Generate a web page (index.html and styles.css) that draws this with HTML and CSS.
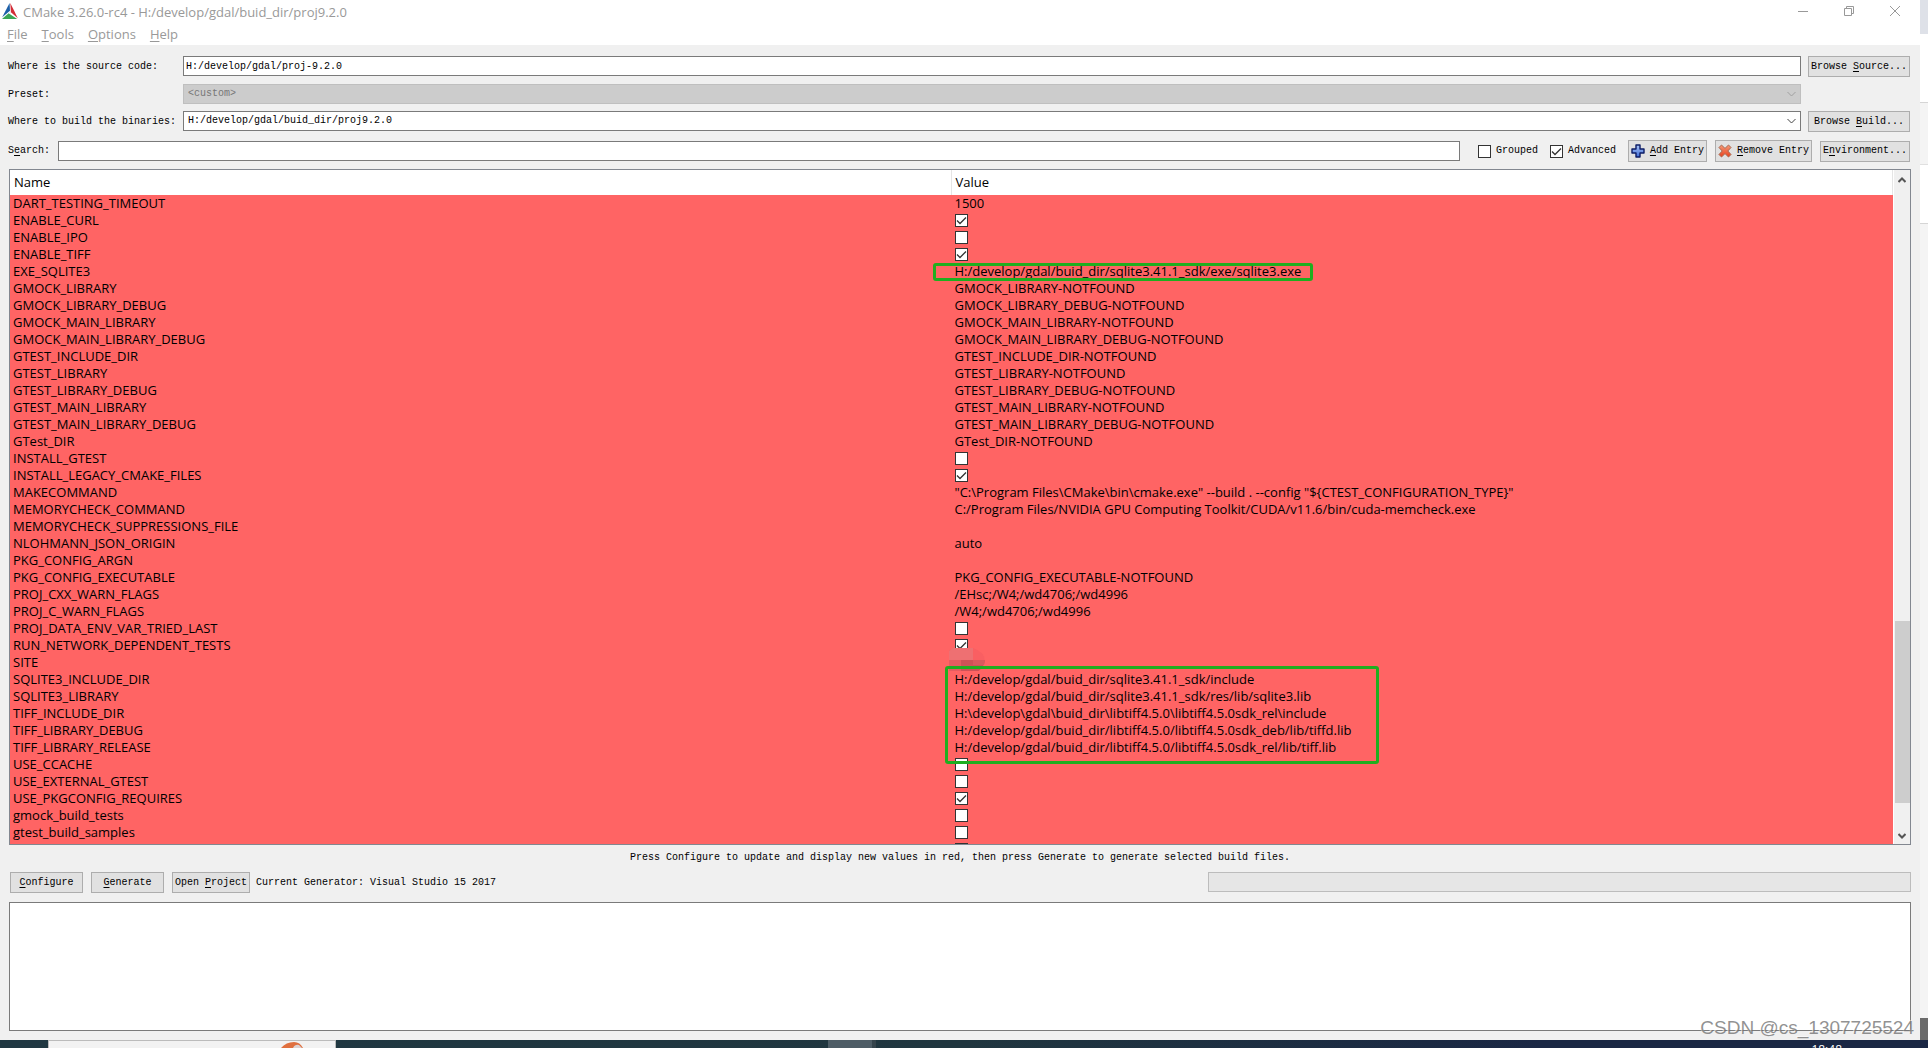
FILE: index.html
```html
<!DOCTYPE html>
<html lang="en">
<head>
<meta charset="utf-8">
<title>CMake 3.26.0-rc4</title>
<link rel="stylesheet" href="styles.css">
</head>
<body>
<div class="desktop">
  <main class="window">
    <header class="titlebar">
      <svg class="logo" viewBox="0 0 16 16" width="16" height="16" aria-hidden="true">
        <path d="M7.6 0 0.2 14.2 8 7.8Z" fill="#1c5fa8"/>
        <path d="M8.3 0 8.9 9.2 15.8 15.2Z" fill="#d32b35"/>
        <path d="M6.6 10.2 0 16H15.2Z" fill="#3aa655"/>
        <path d="M7.4 9 8.2 8.2 8.6 10.9Z" fill="#c8d4dc"/>
      </svg>
      <h1 class="title">CMake 3.26.0-rc4 - H:/develop/gdal/buid_dir/proj9.2.0</h1>
      <div class="window-buttons">
        <button type="button" aria-label="Minimize"><svg viewBox="0 0 10 10" width="10" height="10"><path d="M0 5.5H10"/></svg></button>
        <button type="button" aria-label="Restore"><svg viewBox="0 0 10 10" width="10" height="10"><path d="M0.5 2.5H7.5V9.5H0.5ZM2.5 2.5V0.5H9.5V7.5H7.5"/></svg></button>
        <button type="button" aria-label="Close"><svg viewBox="0 0 10 10" width="10" height="10"><path d="M0 0 10 10M10 0 0 10"/></svg></button>
      </div>
    </header>
    <nav class="menubar">
      <a href="#file"><u>F</u>ile</a>
      <a href="#tools"><u>T</u>ools</a>
      <a href="#options"><u>O</u>ptions</a>
      <a href="#help"><u>H</u>elp</a>
    </nav>

    <form class="content">
      <div class="paths">
        <label for="source">Where is the source code:</label>
        <input class="field" id="source" type="text" value="H:/develop/gdal/proj-9.2.0">
        <button type="button" class="btn">Browse <u>S</u>ource...</button>

        <label for="preset">Preset:</label>
        <select class="field combo" id="preset" disabled><option>&lt;custom&gt;</option></select>
        <span></span>

        <label for="build">Where to build the binaries:</label>
        <select class="field combo" id="build"><option>H:/develop/gdal/buid_dir/proj9.2.0</option></select>
        <button type="button" class="btn">Browse <u>B</u>uild...</button>
      </div>

      <div class="toolbar">
        <label for="search">S<u>e</u>arch:</label>
        <input class="field search" id="search" type="text">
        <label class="option"><input type="checkbox">Grouped</label>
        <label class="option"><input type="checkbox" checked>Advanced</label>
        <button type="button" class="btn entry">
          <svg viewBox="0 0 14 14" width="14" height="14" aria-hidden="true"><defs><linearGradient id="plus" x2="0" y2="1"><stop offset="0" stop-color="#a9c4f5"/><stop offset="1" stop-color="#3f6bd6"/></linearGradient></defs><path d="M5 1H9V5H13V9H9V13H5V9H1V5H5Z" fill="url(#plus)" stroke="#0c1c66" stroke-width="1.4" stroke-linejoin="round"/></svg>
          <span><u>A</u>dd Entry</span>
        </button>
        <button type="button" class="btn entry">
          <svg viewBox="0 0 14 14" width="14" height="14" aria-hidden="true"><defs><linearGradient id="cross" x2="0" y2="1"><stop offset="0" stop-color="#f59a78"/><stop offset="1" stop-color="#e8401c"/></linearGradient></defs><path d="M3.5 1 7 4.4 10.5 1 13 3.5 9.8 7 13 10.5 10.5 13 7 9.6 3.5 13 1 10.5 4.2 7 1 3.5Z" fill="url(#cross)" stroke="#a8684f" stroke-width="1" stroke-linejoin="round"/></svg>
          <span><u>R</u>emove Entry</span>
        </button>
        <button type="button" class="btn env">E<u>n</u>vironment...</button>
      </div>

      <section class="cache">
        <div class="viewport">
        <table>
          <thead><tr><th>Name</th><th>Value</th></tr></thead>
          <tbody>
            <tr><td>DART_TESTING_TIMEOUT</td><td>1500</td></tr>
            <tr><td>ENABLE_CURL</td><td><input type="checkbox" aria-label="ENABLE_CURL" checked></td></tr>
            <tr><td>ENABLE_IPO</td><td><input type="checkbox" aria-label="ENABLE_IPO"></td></tr>
            <tr><td>ENABLE_TIFF</td><td><input type="checkbox" aria-label="ENABLE_TIFF" checked></td></tr>
            <tr><td>EXE_SQLITE3</td><td>H:/develop/gdal/buid_dir/sqlite3.41.1_sdk/exe/sqlite3.exe<i class="mark mark-exe"></i></td></tr>
            <tr><td>GMOCK_LIBRARY</td><td>GMOCK_LIBRARY-NOTFOUND</td></tr>
            <tr><td>GMOCK_LIBRARY_DEBUG</td><td>GMOCK_LIBRARY_DEBUG-NOTFOUND</td></tr>
            <tr><td>GMOCK_MAIN_LIBRARY</td><td>GMOCK_MAIN_LIBRARY-NOTFOUND</td></tr>
            <tr><td>GMOCK_MAIN_LIBRARY_DEBUG</td><td>GMOCK_MAIN_LIBRARY_DEBUG-NOTFOUND</td></tr>
            <tr><td>GTEST_INCLUDE_DIR</td><td>GTEST_INCLUDE_DIR-NOTFOUND</td></tr>
            <tr><td>GTEST_LIBRARY</td><td>GTEST_LIBRARY-NOTFOUND</td></tr>
            <tr><td>GTEST_LIBRARY_DEBUG</td><td>GTEST_LIBRARY_DEBUG-NOTFOUND</td></tr>
            <tr><td>GTEST_MAIN_LIBRARY</td><td>GTEST_MAIN_LIBRARY-NOTFOUND</td></tr>
            <tr><td>GTEST_MAIN_LIBRARY_DEBUG</td><td>GTEST_MAIN_LIBRARY_DEBUG-NOTFOUND</td></tr>
            <tr><td>GTest_DIR</td><td>GTest_DIR-NOTFOUND</td></tr>
            <tr><td>INSTALL_GTEST</td><td><input type="checkbox" aria-label="INSTALL_GTEST"></td></tr>
            <tr><td>INSTALL_LEGACY_CMAKE_FILES</td><td><input type="checkbox" aria-label="INSTALL_LEGACY_CMAKE_FILES" checked></td></tr>
            <tr><td>MAKECOMMAND</td><td>"C:\Program Files\CMake\bin\cmake.exe" --build . --config "${CTEST_CONFIGURATION_TYPE}"</td></tr>
            <tr><td>MEMORYCHECK_COMMAND</td><td>C:/Program Files/NVIDIA GPU Computing Toolkit/CUDA/v11.6/bin/cuda-memcheck.exe</td></tr>
            <tr><td>MEMORYCHECK_SUPPRESSIONS_FILE</td><td></td></tr>
            <tr><td>NLOHMANN_JSON_ORIGIN</td><td>auto</td></tr>
            <tr><td>PKG_CONFIG_ARGN</td><td></td></tr>
            <tr><td>PKG_CONFIG_EXECUTABLE</td><td>PKG_CONFIG_EXECUTABLE-NOTFOUND</td></tr>
            <tr><td>PROJ_CXX_WARN_FLAGS</td><td>/EHsc;/W4;/wd4706;/wd4996</td></tr>
            <tr><td>PROJ_C_WARN_FLAGS</td><td>/W4;/wd4706;/wd4996</td></tr>
            <tr><td>PROJ_DATA_ENV_VAR_TRIED_LAST</td><td><input type="checkbox" aria-label="PROJ_DATA_ENV_VAR_TRIED_LAST"></td></tr>
            <tr><td>RUN_NETWORK_DEPENDENT_TESTS</td><td><input type="checkbox" aria-label="RUN_NETWORK_DEPENDENT_TESTS" checked></td></tr>
            <tr><td>SITE</td><td><svg class="mosaic" viewBox="0 0 36 30" width="36" height="30" aria-hidden="true"><path d="M0 2Q5 0 12 0H24Q36 4 36 14Q34 22 22 26L10 28 0 30Z" fill="#f95f62"/><path d="M0 3 4 0H24V12H0Z" fill="#ee7072"/><path d="M0 12H12V24H0Z" fill="#e65c60"/><path d="M12 12H36Q35 20 27 25H12Z" fill="#ce5257"/><path d="M24 12H36L35 17H24Z" fill="#d95a5e"/></svg></td></tr>
            <tr><td>SQLITE3_INCLUDE_DIR</td><td>H:/develop/gdal/buid_dir/sqlite3.41.1_sdk/include<i class="mark mark-libs"></i></td></tr>
            <tr><td>SQLITE3_LIBRARY</td><td>H:/develop/gdal/buid_dir/sqlite3.41.1_sdk/res/lib/sqlite3.lib</td></tr>
            <tr><td>TIFF_INCLUDE_DIR</td><td>H:\develop\gdal\buid_dir\libtiff4.5.0\libtiff4.5.0sdk_rel\include</td></tr>
            <tr><td>TIFF_LIBRARY_DEBUG</td><td>H:/develop/gdal/buid_dir/libtiff4.5.0/libtiff4.5.0sdk_deb/lib/tiffd.lib</td></tr>
            <tr><td>TIFF_LIBRARY_RELEASE</td><td>H:/develop/gdal/buid_dir/libtiff4.5.0/libtiff4.5.0sdk_rel/lib/tiff.lib</td></tr>
            <tr><td>USE_CCACHE</td><td><input type="checkbox" aria-label="USE_CCACHE"></td></tr>
            <tr><td>USE_EXTERNAL_GTEST</td><td><input type="checkbox" aria-label="USE_EXTERNAL_GTEST"></td></tr>
            <tr><td>USE_PKGCONFIG_REQUIRES</td><td><input type="checkbox" aria-label="USE_PKGCONFIG_REQUIRES" checked></td></tr>
            <tr><td>gmock_build_tests</td><td><input type="checkbox" aria-label="gmock_build_tests"></td></tr>
            <tr><td>gtest_build_samples</td><td><input type="checkbox" aria-label="gtest_build_samples"></td></tr>
            <tr><td>gtest_build_tests</td><td><input type="checkbox" aria-label="gtest_build_tests"></td></tr>
          </tbody>
        </table>
        </div>
        <div class="scrollbar">
          <svg viewBox="0 0 8 6" width="8" height="6" aria-hidden="true"><path d="M0.5 5 4 1.5 7.5 5"/></svg>
          <div class="track"><div class="thumb"></div></div>
          <svg viewBox="0 0 8 6" width="8" height="6" aria-hidden="true"><path d="M0.5 1 4 4.5 7.5 1"/></svg>
        </div>
      </section>

      <p class="hint">Press Configure to update and display new values in red, then press Generate to generate selected build files.</p>

      <div class="actions">
        <button type="button" class="btn action"><u>C</u>onfigure</button>
        <button type="button" class="btn action"><u>G</u>enerate</button>
        <button type="button" class="btn project">Open <u>P</u>roject</button>
        <span class="generator">Current Generator: Visual Studio 15 2017</span>
        <div class="progress" role="progressbar" aria-label="Progress"></div>
      </div>
      <textarea class="log" aria-label="Output" readonly></textarea>
    </form>
  </main>

  <aside class="behind"><div class="tab"></div><div class="blank"></div><div class="band"></div><div class="blank"></div><div class="rest"></div><div class="end"></div></aside>

  <footer class="taskbar">
    <div class="taskbar-search"><svg viewBox="0 0 24 7" width="24" height="7" aria-hidden="true"><path d="M0 7Q5 1 13 1Q19 1 22 7Z" fill="#e0703f"/><path d="M12 7Q14 3 18 4L21 7Z" fill="#ddd3d3"/></svg></div>
    <div class="task"></div>
    <time class="clock">18:48</time>
  </footer>
  <div class="watermark">CSDN @cs_1307725524</div>
</div>
</body>
</html>
```
FILE: styles.css
```css
* {
  box-sizing: border-box;
}

body {
  margin: 0;
  font: 10px/12px "Liberation Mono", monospace;
  color: #000;
}

.desktop {
  position: relative;
  display: grid;
  grid-template: minmax(0, 1fr) 8px / minmax(0, 1fr) 8px;
  height: 100vh;
  overflow: hidden;
}

.window {
  display: flex;
  flex-direction: column;
  min-height: 0;
  background: #f0f0f0;
}

button,
input,
select,
textarea {
  margin: 0;
  font: inherit;
  color: inherit;
}

u {
  text-underline-offset: 2px;
}

/* Title bar and menu */
.titlebar {
  display: flex;
  align-items: center;
  gap: 5px;
  height: 24px;
  padding-left: 2px;
  background: #fff;
}

.logo {
  margin-top: -2px;
}

.title {
  flex: 1;
  margin: 0;
  font: 13px/24px "Open Sans", sans-serif;
  color: #999;
}

.window-buttons {
  display: flex;
  gap: 16px;
  padding: 0 10px 3px 0;
}

.window-buttons button {
  display: grid;
  place-items: center;
  width: 30px;
  height: 20px;
  padding: 0;
  border: 0;
  background: none;
}

.window-buttons path {
  fill: none;
  stroke: #999;
}

.menubar {
  display: flex;
  gap: 14px;
  height: 21px;
  padding-left: 7px;
  background: #fff;
  font: 13px/20px "Open Sans", sans-serif;
}

.menubar a {
  color: #999;
  text-decoration: none;
}

/* Form */
.content {
  display: flex;
  flex: 1;
  flex-direction: column;
  min-height: 0;
  padding: 11px 9px 9px;
}

.paths {
  display: grid;
  grid-template-columns: 168px minmax(0, 1fr) 102px;
  gap: 7px;
  margin: 0 1px 0 -1px;
}

.paths label {
  padding-top: 2px;
  line-height: 18px;
  white-space: nowrap;
}

.field {
  width: 100%;
  height: 20px;
  padding: 0 2px;
  border: 1px solid #7a7a7a;
  border-radius: 0;
  background: #fff;
}

.combo {
  appearance: none;
  padding: 0 4px;
  background: #fff url("data:image/svg+xml,%3Csvg xmlns='http://www.w3.org/2000/svg' width='9' height='6'%3E%3Cpath d='M.5 1l4 4 4-4' fill='none' stroke='%23444'/%3E%3C/svg%3E") no-repeat right 4px center;
}

.combo:disabled {
  border-color: #bfbfbf;
  background-color: #ccc;
  color: #777;
  opacity: 1;
  background-image: url("data:image/svg+xml,%3Csvg xmlns='http://www.w3.org/2000/svg' width='9' height='6'%3E%3Cpath d='M.5 1l4 4 4-4' fill='none' stroke='%23a0a0a0'/%3E%3C/svg%3E");
}

.btn {
  height: 21px;
  padding: 0;
  border: 1px solid #adadad;
  background: #e1e1e1;
  text-align: center;
  white-space: nowrap;
}

.toolbar {
  display: flex;
  align-items: center;
  gap: 8px;
  margin: 8px 1px 7px -1px;
}

.search {
  flex: 1;
  width: auto;
  min-width: 0;
  margin-right: 10px;
}

.option {
  display: flex;
  align-items: center;
  gap: 5px;
  margin-right: 4px;
}

.entry {
  display: flex;
  align-items: center;
  gap: 5px;
  height: 22px;
  padding: 0 2px;
}

.env {
  width: 90px;
}

input[type="checkbox"] {
  display: block;
  appearance: none;
  width: 13px;
  height: 13px;
  border: 1px solid #333;
  background: #fff;
}

input[type="checkbox"]:checked {
  background-image: url("data:image/svg+xml,%3Csvg xmlns='http://www.w3.org/2000/svg' width='11' height='11'%3E%3Cpath d='M1 5.5l3 3L10 2.5' fill='none' stroke='%23333' stroke-width='1.3'/%3E%3C/svg%3E");
}

/* Cache table */
.cache {
  display: flex;
  flex: 1;
  min-height: 0;
  border: 1px solid #828790;
  background: #f0f0f0;
}

.viewport {
  flex: 1;
  min-width: 0;
  overflow: hidden;
}

table {
  width: 100%;
  table-layout: fixed;
  border-collapse: separate;
  border-spacing: 0;
  font: 13px/17px "Open Sans", sans-serif;
}

th {
  height: 25px;
  padding: 0 4px;
  border-right: 1px solid #e5e5e5;
  background: #fff;
  font-weight: 400;
  text-align: left;
}

td {
  position: relative;
  height: 17px;
  padding: 0 3px;
  background: #ff6464;
  white-space: nowrap;
}

.mark {
  position: absolute;
  z-index: 1;
  border: 3px solid #1fae1f;
  border-radius: 3px;
}

.mark-exe {
  top: 0;
  left: -19px;
  width: 380px;
  height: 18px;
}

.mark-libs {
  top: -5px;
  left: -7px;
  width: 434px;
  height: 98px;
}

.mosaic {
  position: absolute;
  top: -6px;
  left: -3px;
}

.scrollbar {
  display: flex;
  flex-direction: column;
  align-items: center;
  width: 17px;
  padding: 7px 0 5px;
  border-left: 1px solid #fff;
}

.scrollbar path {
  fill: none;
  stroke: #555;
  stroke-width: 2;
}

.track {
  display: flex;
  flex: 1;
  flex-direction: column;
  width: 15px;
  padding: 438px 0 30px;
}

.thumb {
  flex: 1;
  background: #cdcdcd;
}

/* Footer area */
.hint {
  margin: 0;
  padding-bottom: 2px;
  line-height: 25px;
  text-align: center;
}

.actions {
  display: flex;
  align-items: flex-start;
  gap: 8px;
  margin-bottom: 8px;
  padding-left: 1px;
}

.action {
  width: 73px;
}

.project {
  width: 78px;
}

.generator {
  flex: 1;
  margin-left: -2px;
  line-height: 22px;
}

.progress {
  width: 37%;
  height: 20px;
  border: 1px solid #bcbcbc;
  background: #e6e6e6;
}

.log {
  display: block;
  width: 100%;
  height: 129px;
  border: 1px solid #7a7a7a;
  background: #fff;
  resize: none;
}

/* Sliver of the window behind */
.behind {
  display: flex;
  flex-direction: column;
  background: #f4f4f4;
}

.tab {
  height: 34px;
  background: #dee1e8;
}

.blank {
  height: 69px;
  border-bottom: 1px solid #d5d5d5;
  background: #fff;
}

.band {
  height: 62px;
  border-bottom: 1px solid #e0e0e0;
}

.band + .blank {
  height: 59px;
}

.rest {
  flex: 1;
}

.end {
  height: 22px;
  background: #6b6b6b;
}

/* Taskbar */
.taskbar {
  display: flex;
  grid-column: 1 / -1;
  overflow: hidden;
  padding: 0 86px 0 48px;
  background: linear-gradient(90deg, #203842, #20363f 50%, #1a2744 80%, #1a2744);
}

.taskbar-search {
  width: 288px;
  padding-left: 232px;
  border: 1px solid #bbb;
  border-bottom: 0;
  background: #f2f2f2;
}

.taskbar-search svg {
  display: block;
}

.task {
  width: 48px;
  margin-left: 492px;
  border-right: 4px solid #35444c;
  background: #4e5d66;
}

.clock {
  margin-left: auto;
  padding-top: 3px;
  font: 12px/14px "Open Sans", sans-serif;
  color: #fff;
}

.watermark {
  position: absolute;
  right: 14px;
  bottom: 9px;
  z-index: 2;
  font: 19px/22px "Liberation Sans", sans-serif;
  color: rgba(110, 110, 110, 0.75);
  text-shadow: -1px -1px 0 rgba(255, 255, 255, 0.6);
}
```
